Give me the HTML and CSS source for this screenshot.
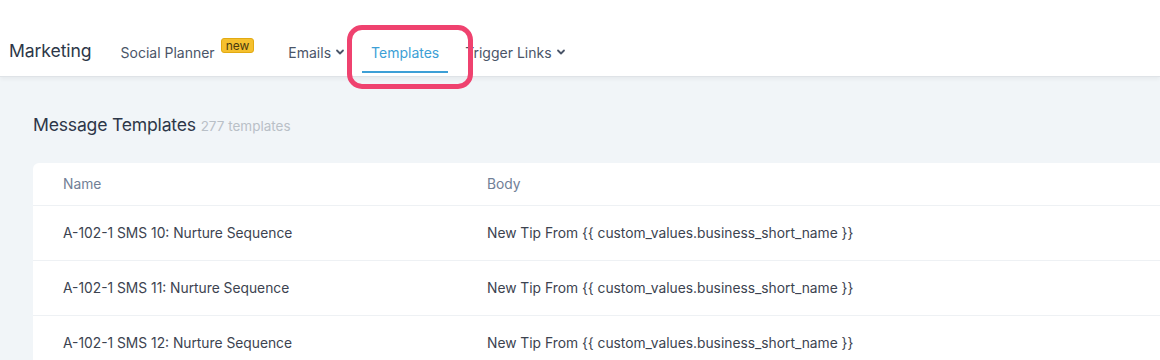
FILE: index.html
```html
<!DOCTYPE html>
<html>
<head>
<meta charset="utf-8">
<link rel="stylesheet" href="styles.css">
</head>
<body>
<header class="topbar">
  <div class="brand">Marketing</div>
  <nav class="tabs">
    <div class="tab">Social Planner <span class="badge">new</span></div>
    <div class="tab">Emails <svg class="chev" viewBox="0 0 10 10"><path d="M2 3.5 L5 6.5 L8 3.5" fill="none" stroke="currentColor" stroke-width="1.8" stroke-linecap="round" stroke-linejoin="round"/></svg></div>
    <div class="tab active">Templates</div>
    <div class="tab">Trigger Links <svg class="chev" viewBox="0 0 10 10"><path d="M2 3.5 L5 6.5 L8 3.5" fill="none" stroke="currentColor" stroke-width="1.8" stroke-linecap="round" stroke-linejoin="round"/></svg></div>
  </nav>
  <div class="highlight"></div>
</header>
<main class="content">
  <h1 class="title">Message Templates <span class="count">277 templates</span></h1>
  <div class="card">
    <div class="row head">
      <div class="c-name">Name</div>
      <div class="c-body">Body</div>
    </div>
    <div class="row">
      <div class="c-name">A-102-1 SMS 10: Nurture Sequence</div>
      <div class="c-body">New Tip From {{ custom_values.business_short_name }}</div>
    </div>
    <div class="row">
      <div class="c-name">A-102-1 SMS 11: Nurture Sequence</div>
      <div class="c-body">New Tip From {{ custom_values.business_short_name }}</div>
    </div>
    <div class="row">
      <div class="c-name">A-102-1 SMS 12: Nurture Sequence</div>
      <div class="c-body">New Tip From {{ custom_values.business_short_name }}</div>
    </div>
  </div>
</main>
</body>
</html>
```
FILE: styles.css
```css
* { box-sizing: border-box; }
html, body { margin: 0; padding: 0; }
body {
  width: 1160px;
  height: 360px;
  overflow: hidden;
  background: #f1f5f8;
  font-family: Inter, "Noto Sans", sans-serif;
  color: #2d3748;
}
.topbar {
  position: relative;
  height: 76px;
  background: #fff;
  display: flex;
  align-items: stretch;
  padding: 26px 0 0 9px;
  box-shadow: 0 1px 0 #dfe3e7, 0 3px 4px rgba(0,0,0,0.05);
  z-index: 1;
}
.brand {
  font-size: 17.6px;
  color: #2d3748;
  display: flex;
  align-items: center;
  padding-bottom: 2px;
  margin-right: 20px;
  letter-spacing: -0.1px;
}
.tabs {
  display: flex;
  align-items: stretch;
  gap: 8px;
}
.tab {
  display: flex;
  align-items: center;
  padding: 7px 9px 0;
  font-size: 14px;
  color: #4a5568;
  border-bottom: 2px solid transparent;
  margin-bottom: 3px;
}
.tab.active {
  color: #3d9fd6;
  border-bottom-color: #3d9fd6;
}
.badge {
  display: inline-block;
  background: #f5c02e;
  border: 1px solid #e2aa12;
  color: #4a3b10;
  font-size: 12px;
  line-height: 13px;
  padding: 0 4px;
  border-radius: 3px;
  margin-left: 6px;
  margin-right: 8px;
  position: relative;
  top: -7px;
}
.chev {
  width: 10px;
  height: 10px;
  margin-left: 4px;
  color: #4a5568;
}
.highlight {
  position: absolute;
  left: 347px;
  top: 25px;
  width: 126px;
  height: 64px;
  border: 5px solid #ef426f;
  border-radius: 15px;
}
.content {
  padding: 38px 0 0 33px;
}
.title {
  margin: 0 0 28px;
  font-size: 17.6px;
  font-weight: 400;
  color: #2d3748;
  letter-spacing: -0.2px;
}
.count {
  font-size: 13.5px;
  color: #b9c0c7;
  letter-spacing: 0;
}
.card {
  background: #fff;
  border-radius: 6px 0 0 6px;
}
.row {
  display: flex;
  align-items: center;
  height: 55px;
  border-top: 1px solid #eef1f4;
  font-size: 13.8px;
  color: #3c4350;
}
.row.head {
  height: 42px;
  border-top: none;
  color: #718096;
}
.c-name { width: 454px; padding-left: 30px; }
.c-body { flex: 1; }
```
